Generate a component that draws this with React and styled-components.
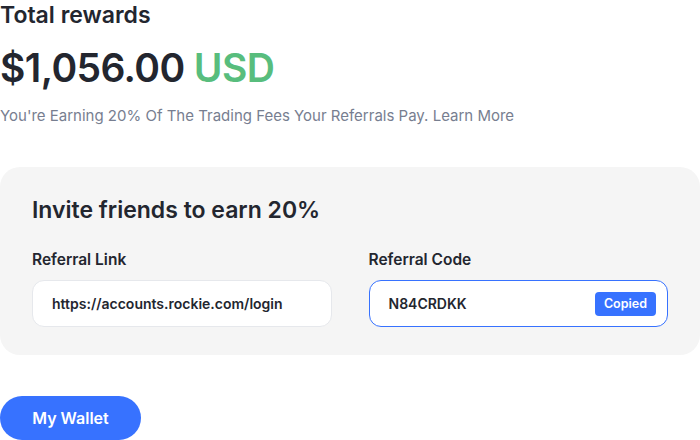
import React from 'react'
import styled, { createGlobalStyle } from 'styled-components'

const GlobalStyle = createGlobalStyle`
  * { box-sizing: border-box; }
  body {
    margin: 0;
    background: #fff;
    font-family: Inter, "Noto Sans", sans-serif;
    color: #23262f;
  }
`

const Page = styled.div`
  width: 700px;
  display: flex;
  flex-direction: column;
`

const Title = styled.h2`
  margin: 0;
  font-size: 23px;
  line-height: 30px;
  font-weight: 600;
`

const Amount = styled.h1`
  margin: 14px 0 0;
  font-size: 39px;
  line-height: 48px;
  font-weight: 600;
  letter-spacing: -0.6px;
`

const Currency = styled.span`
  color: #58bd7d;
`

const Note = styled.p`
  margin: 14px 0 0;
  font-size: 15px;
  line-height: 20px;
  color: #777e90;
`

const Panel = styled.section`
  margin-top: 41px;
  background: #f5f5f5;
  border-radius: 20px;
  padding: 27px 32px 28px;
`

const PanelTitle = styled.h3`
  margin: 0;
  font-size: 23px;
  line-height: 32px;
  font-weight: 600;
`

const Fields = styled.div`
  margin-top: 23px;
  display: grid;
  grid-template-columns: 1fr 1fr;
  gap: 37px;
`

const Field = styled.div`
  display: flex;
  flex-direction: column;
`

const Label = styled.label`
  font-size: 15.5px;
  line-height: 22px;
  font-weight: 600;
  margin-bottom: 9px;
`

const InputBox = styled.div`
  height: 47px;
  border-radius: 12px;
  background: #fff;
  border: 1px solid ${p => (p.$active ? '#3772ff' : '#e6e8ec')};
  display: flex;
  align-items: center;
  justify-content: space-between;
  padding: 0 11px 0 19px;
  font-size: 14px;
  font-weight: 600;
`

const Badge = styled.span`
  background: #3772ff;
  color: #fff;
  font-size: 12.5px;
  font-weight: 600;
  border-radius: 4px;
  height: 24px;
  padding: 0 9px;
  display: flex;
  align-items: center;
`

const WalletButton = styled.button`
  margin-top: 41px;
  width: 141px;
  height: 44px;
  border: none;
  border-radius: 22px;
  background: #3772ff;
  color: #fff;
  font-family: inherit;
  font-size: 16px;
  font-weight: 600;
`

export default function App() {
  return (
    <Page>
      <GlobalStyle />
      <Title>Total rewards</Title>
      <Amount>
        $1,056.00 <Currency>USD</Currency>
      </Amount>
      <Note>You're Earning 20% Of The Trading Fees Your Referrals Pay. Learn More</Note>

      <Panel>
        <PanelTitle>Invite friends to earn 20%</PanelTitle>
        <Fields>
          <Field>
            <Label>Referral Link</Label>
            <InputBox>https://accounts.rockie.com/login</InputBox>
          </Field>
          <Field>
            <Label>Referral Code</Label>
            <InputBox $active>
              N84CRDKK
              <Badge>Copied</Badge>
            </InputBox>
          </Field>
        </Fields>
      </Panel>

      <div>
        <WalletButton>My Wallet</WalletButton>
      </div>
    </Page>
  )
}
